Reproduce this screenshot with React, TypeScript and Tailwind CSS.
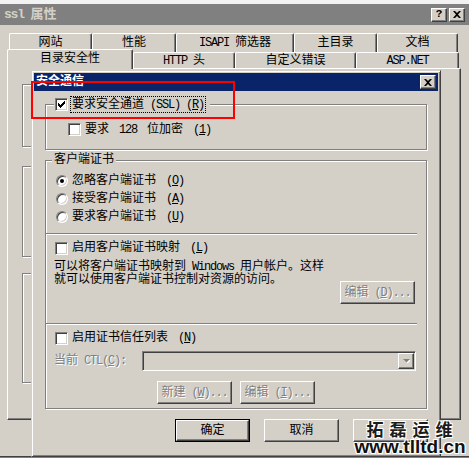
import React from "react";

// classic win2k palette: face #d4d0c8, shadow #808080, dark #404040
const raised =
  "bg-[#d4d0c8] border border-t-white border-l-white border-r-[#404040] border-b-[#404040] shadow-[inset_-1px_-1px_0_#808080]";
const sunken =
  "border border-t-[#808080] border-l-[#808080] border-r-white border-b-white shadow-[inset_1px_1px_0_#404040,inset_-1px_-1px_0_#d4d0c8]";
const etched = "border border-[#808080] shadow-[inset_1px_1px_0_#fff,1px_1px_0_#fff]";
const grayText = "text-[#808080] [text-shadow:1px_1px_0_#fff]";
const halo = "[text-shadow:1px_1px_0_#fff,-1px_-1px_0_#fff,1px_-1px_0_#fff,-1px_1px_0_#fff]";

// latin runs are squeezed to simsun's 6px half-width advance; "&X" marks the accelerator
function Txt({ s }: { s: string }) {
  const parts = s.split(/([\x00-\xff]+)/).filter(Boolean);
  return (
    <>
      {parts.map((p, i) => {
        if (!/^[\x00-\xff]+$/.test(p)) return <span key={i}>{p}</span>;
        const k = p.indexOf("&");
        if (k < 0)
          return (
            <span key={i} className="tracking-[-1.2px] whitespace-pre">
              {p}
            </span>
          );
        return (
          <span key={i} className="tracking-[-1.2px] whitespace-pre">
            {p.slice(0, k)}
            <u className="underline-offset-1">{p[k + 1]}</u>
            {p.slice(k + 2)}
          </span>
        );
      })}
    </>
  );
}

function Check({ on }: { on?: boolean }) {
  return (
    <span className={`w-[13px] h-[13px] shrink-0 bg-white flex items-center justify-center ${sunken}`}>
      {on && (
        <svg width="7" height="7" viewBox="0 0 7 7">
          <path d="M0 2h1v1h1v1h1v-1h1v-1h1v-1h1v-1h1v3h-1v1h-1v1h-1v1h-1v1h-1v-1h-1v-1h-1z" fill="#000" />
        </svg>
      )}
    </span>
  );
}

function Radio({ on }: { on?: boolean }) {
  return (
    <span className={`w-[12px] h-[12px] shrink-0 rounded-full bg-white flex items-center justify-center ${sunken}`}>
      {on && <span className="w-[4px] h-[4px] rounded-full bg-black" />}
    </span>
  );
}

function Btn({ label, disabled, def }: { label?: string; disabled?: boolean; def?: boolean }) {
  const inner = (
    <div className={`w-full h-full flex items-center justify-center ${raised} ${disabled ? grayText : ""}`}>
      {label && <Txt s={label} />}
    </div>
  );
  if (def) return <div className="w-[75px] h-[23px] border border-black">{inner}</div>;
  return <div className="w-[75px] h-[23px]">{inner}</div>;
}

function CloseGlyph() {
  return (
    <svg width="8" height="7" viewBox="0 0 8 7">
      <path d="M0 0h2l2 2l2-2h2l-3 3.5l3 3.5h-2l-2-2l-2 2h-2l3-3.5z" fill="#000" />
    </svg>
  );
}

const row1 = [
  { label: "网站", w: "w-[83px]" },
  { label: "性能", w: "w-[84px]" },
  { label: "ISAPI 筛选器", w: "w-[118px]" },
  { label: "主目录", w: "w-[83px]" },
  { label: "文档", w: "w-[81px]" },
];

const row2 = [
  { label: "目录安全性", w: "w-[126px]", active: true },
  { label: "HTTP 头", w: "w-[102px]" },
  { label: "自定义错误", w: "w-[121px]" },
  { label: "ASP.NET", w: "w-[103px]" },
];

const tabBase =
  "flex items-center justify-center border-t border-l border-white border-r border-r-[#404040] shadow-[inset_-1px_0_0_#808080] rounded-tl-[2px] rounded-tr-[2px]";

const radios = [
  { label: "忽略客户端证书 (&O)", on: true },
  { label: "接受客户端证书 (&A)" },
  { label: "要求客户端证书 (&U)" },
];

export default function App() {
  return (
    <div className="relative w-[469px] h-[458px] overflow-hidden bg-[#d4d0c8] text-black text-[12px] leading-[14px] font-['Liberation_Mono','Noto_Sans_CJK_SC',monospace]">
      <div className="h-[4px] bg-[#f2f2f2]" />

      {/* inactive title bar */}
      <div className="h-[21px] bg-[#808080] flex items-center justify-between pl-[4px] pr-[4px]">
        <span className="font-bold text-[#d4d0c8] text-[13px] leading-[16px]">
          <Txt s="ssl 属性" />
        </span>
        <div className="flex gap-[2px]">
          <div className={`w-[16px] h-[14px] flex items-center justify-center font-bold text-[11px] leading-none ${raised}`}>?</div>
          <div className={`w-[16px] h-[14px] flex items-center justify-center ${raised}`}>
            <CloseGlyph />
          </div>
        </div>
      </div>

      <div className="pt-[8px]">
        <div className="flex pl-[9px] h-[19px]">
          {row1.map((t) => (
            <div key={t.label} className={`${t.w} h-full pb-[1px] ${tabBase}`}>
              <Txt s={t.label} />
            </div>
          ))}
        </div>
        <div className="flex pl-[7px] h-[16px]">
          {row2.map((t) =>
            t.active ? (
              <div key={t.label} className={`${t.w} -mt-[3px] h-[20px] pb-[2px] relative z-10 bg-[#d4d0c8] ${tabBase}`}>
                <Txt s={t.label} />
              </div>
            ) : (
              <div key={t.label} className={`${t.w} h-full bg-[#d4d0c8] ${tabBase}`}>
                <Txt s={t.label} />
              </div>
            )
          )}
        </div>

        {/* property page underneath the modal */}
        <div className="ml-[7px] w-[454px] h-[352px] border border-t-white border-l-white border-r-[#404040] border-b-[#404040] shadow-[inset_-1px_-1px_0_#808080] pl-[14px]">
          <div className={`mt-[15px] w-[400px] h-[63px] ${etched}`} />
          <div className={`mt-[19px] w-[400px] h-[91px] ${etched}`} />
          <div className={`mt-[16px] w-[400px] h-[110px] ${etched}`} />
        </div>
      </div>
      <div className="h-[36px]" />
      <div className="h-px bg-[#404040]" />
      <div className="h-px bg-[#808080]" />

      {/* 安全通信 modal */}
      <div className="absolute left-[31px] top-[70px] w-[410px] h-[387px] bg-[#d4d0c8] p-[2px] border border-t-[#d4d0c8] border-l-[#d4d0c8] border-r-[#404040] border-b-[#404040] shadow-[inset_1px_1px_0_#fff,inset_-1px_-1px_0_#808080]">
        <div className="h-[18px] bg-[#0a246a] flex items-center justify-between pl-[2px] pr-[2px]">
          <span className="font-bold text-white text-[12px] leading-[14px]">安全通信</span>
          <div className={`w-[16px] h-[14px] flex items-center justify-center ${raised}`}>
            <CloseGlyph />
          </div>
        </div>

        <div className={`relative mt-[13px] ml-[11px] w-[382px] h-[46px] pt-[18px] pl-[22px] ${etched}`}>
          <div className="absolute left-[8px] -top-[9px] flex items-center gap-[2px] bg-[#d4d0c8] pl-[1px] pr-[4px]">
            <Check on />
            <span className="h-[17px] flex items-center border border-dotted border-black px-[1px]">
              <Txt s="要求安全通道 (SSL) (&R)" />
            </span>
          </div>
          <div className="h-[13px] flex items-center gap-[4px]">
            <Check />
            <Txt s="要求 128 位加密 (&1)" />
          </div>
        </div>

        <div className={`relative mt-[10px] ml-[11px] w-[382px] h-[249px] ${etched}`}>
          <div className="absolute left-[6px] -top-[8px] bg-[#d4d0c8] px-[2px]">客户端证书</div>

          <div className="pt-[11px] pl-[10px]">
            {radios.map((r) => (
              <div key={r.label} className="h-[18px] flex items-center gap-[4px]">
                <Radio on={r.on} />
                <Txt s={r.label} />
              </div>
            ))}
          </div>

          <div className="mt-[7px] w-[371px] h-[2px] border-t border-t-[#808080] border-b border-b-white" />

          <div className="mt-[4px] h-[18px] pl-[9px] flex items-center gap-[4px]">
            <Check />
            <Txt s="启用客户端证书映射 (&L)" />
          </div>

          <div className="mt-[4px] pl-[8px] pr-[11px] flex justify-between items-start">
            <p className="leading-[13px]">
              <Txt s="可以将客户端证书映射到 Windows 用户帐户。这样" />
              <br />
              就可以使用客户端证书控制对资源的访问。
            </p>
            <div className="mt-[20px]">
              <Btn label="编辑 (&D)..." disabled />
            </div>
          </div>

          <div className="mt-[19px] w-[371px] h-[2px] border-t border-t-[#808080] border-b border-b-white" />

          <div className="mt-[4px] h-[18px] pl-[9px] flex items-center gap-[4px]">
            <Check />
            <Txt s="启用证书信任列表 (&N)" />
          </div>

          <div className="mt-[4px] h-[20px] pl-[8px] flex items-center">
            <span className={`w-[88px] ${grayText}`}>
              <Txt s="当前 CTL(&C):" />
            </span>
            <div className={`w-[274px] h-[20px] bg-[#d4d0c8] flex justify-end items-center pr-[1px] ${sunken}`}>
              <div className={`w-[16px] h-[16px] flex items-center justify-center ${raised}`}>
                <svg width="7" height="5" viewBox="0 0 7 5">
                  <path d="M1 1h7l-3.5 3.5z" fill="#fff" />
                  <path d="M0 0h7l-3.5 3.5z" fill="#808080" />
                </svg>
              </div>
            </div>
          </div>

          <div className="mt-[10px] pl-[111px] flex gap-[8px]">
            <Btn label="新建 (&W)..." disabled />
            <Btn label="编辑 (&I)..." disabled />
          </div>
        </div>

        <div className="mt-[10px] ml-[141px] flex gap-[14px]">
          <Btn label="确定" def />
          <Btn label="取消" />
          <Btn />
        </div>
      </div>

      {/* red highlight drawn on the screenshot */}
      <div className="absolute left-[31px] top-[81px] w-[204px] h-[38px] border-2 border-[#ff0000]" />

      {/* watermark */}
      <div className="absolute left-[354px] top-[419px] w-[112px] flex flex-col items-center">
        <span className={`text-[17px] leading-[19px] font-bold tracking-[6px] pl-[5px] text-[#1c1c1c] font-['Noto_Sans_CJK_SC',sans-serif] ${halo}`}>
          拓磊运维
        </span>
        <span className={`text-[19px] leading-[17px] font-bold text-[#111] font-['Liberation_Sans',sans-serif] ${halo}`}>
          www.tlltd.cn
        </span>
      </div>
    </div>
  );
}
